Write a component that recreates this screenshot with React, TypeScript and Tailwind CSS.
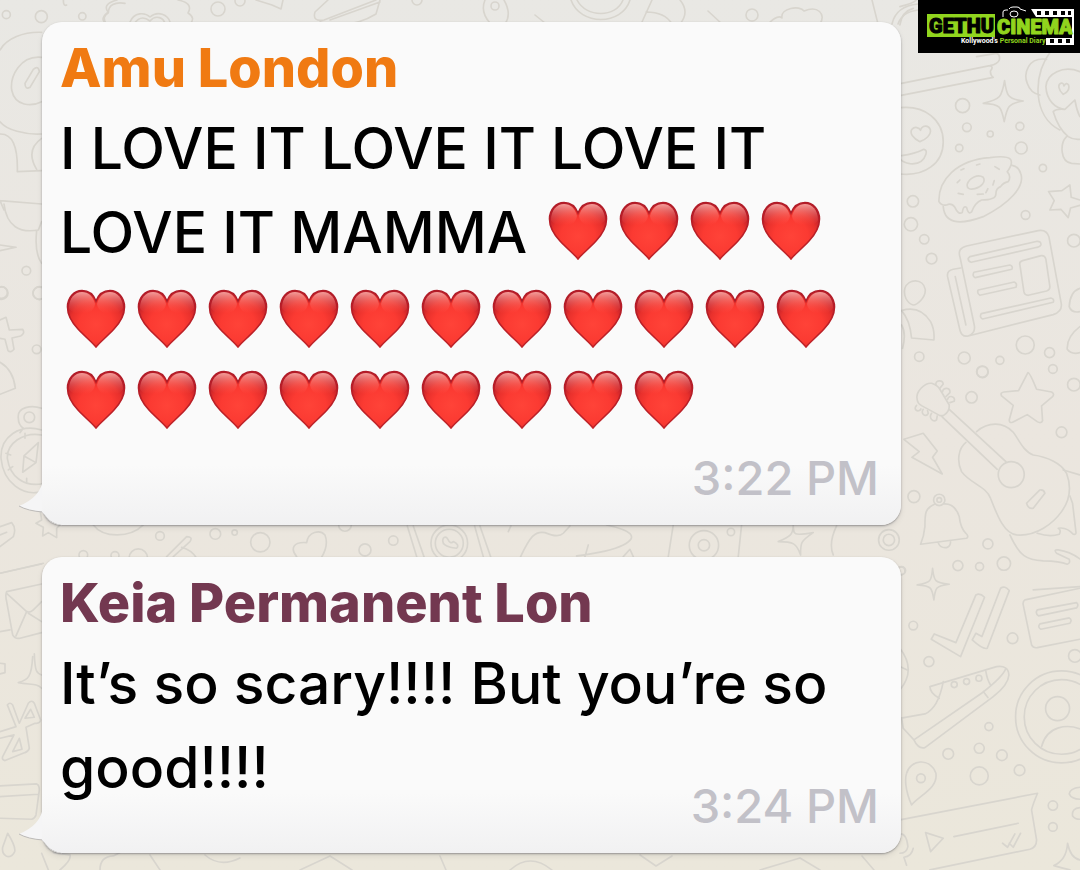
import React from "react";

const Heart = () => (
  <svg viewBox="0 0 60 60" className="inline-block w-[60px] h-[60px] shrink-0" role="img" aria-label="red heart">
    <defs>
      <radialGradient id="heartFill" cx="0.5" cy="0.6" r="0.6">
        <stop offset="0" stopColor="#ff4338" />
        <stop offset="0.5" stopColor="#fb3a32" />
        <stop offset="0.75" stopColor="#e8302c" />
        <stop offset="1" stopColor="#b81c28" />
      </radialGradient>
      <linearGradient id="heartShine" x1="0" y1="0" x2="0" y2="1">
        <stop offset="0" stopColor="#ffb4ae" stopOpacity="0.85" />
        <stop offset="0.95" stopColor="#ff5a50" stopOpacity="0" />
      </linearGradient>
      <linearGradient id="heartEdge" x1="0" y1="0" x2="0" y2="1">
        <stop offset="0" stopColor="#b01c28" />
        <stop offset="1" stopColor="#bf2227" />
      </linearGradient>
    </defs>
    <path
      d="M30 58C27 54 19 47.500 12 40C5 32.500 1.500 26 1.500 18C1.500 8.500 8 1.500 16 1.500C22.500 1.500 27.500 5.500 30 12C32.500 5.500 37.500 1.500 44 1.500C52 1.500 58.500 8.500 58.500 18C58.500 26 55 32.500 48 40C41 47.500 33 54 30 58Z"
      fill="url(#heartFill)"
      stroke="url(#heartEdge)"
      strokeWidth="1.600"
    />
    <path d="M3 19C3 9 9 3 16 3C22.500 3 27 7 29 15C27 28 8 28 3 19Z" fill="url(#heartShine)" />
    <path d="M57 19C57 9 51 3 44 3C37.500 3 33 7 31 15C33 28 52 28 57 19Z" fill="url(#heartShine)" />
  </svg>
);

const hearts = (count: number) =>
  Array.from({ length: count }, (_, i) => (
    <span key={i} className="inline-flex w-[71px] justify-center">
      <Heart />
    </span>
  ));

const Doodles = () => (
  <svg
    viewBox="0 0 1080 870"
    preserveAspectRatio="xMaxYMin slice"
    className="absolute inset-0 h-full w-full fill-none stroke-[#d8d5ce]"
    aria-hidden="true"
  >
    <g strokeWidth="5" strokeLinejoin="round" strokeLinecap="round">
      {/* books, smiley, sparkle, doughnut, penguin */}
      <g transform="scale(0.3333) translate(2700 0)">
        <path d="M0 20Q40 10 50 0M0 75Q5 35 40 25M5 250L270 197Q282 200 272 212Q270 225 280 232L0 287M230 170L290 160Q302 165 298 180Q294 192 270 197" />
        <path d="M0 323C75 315 130 360 130 425C130 490 75 530 0 522M60 425C40 415 28 400 36 388C45 378 58 383 62 391C66 376 85 374 91 388C96 405 75 420 60 425ZM5 467Q45 462 72 448Q82 450 78 463Q68 495 30 491Q10 488 2 478" />
        <path d="M314 242C320 285 322 298 370 303C325 310 322 320 313 365C304 320 302 312 250 310C302 298 306 290 314 242Z" />
        <path d="M117 605C115 540 170 480 270 473Q320 466 332 478Q340 492 322 515Q335 530 325 545Q310 548 302 560Q288 565 288 582Q288 600 245 600Q225 608 215 636Q205 645 200 622Q190 615 187 638Q175 645 165 622Q155 608 140 615Q125 618 117 605ZM130 620C135 680 195 670 250 650C330 610 375 560 363 522Q357 500 337 496M202 553C208 532 235 522 250 532C258 545 245 562 225 566C208 570 200 564 202 553Z" />
        <path d="M183 510L192 506M230 495L240 492M285 500L298 508M180 540L172 548M283 542L279 555M175 580L190 583M232 583L250 582M258 578L264 566" />
        <path d="M446 575L486 572L510 555L514 592L540 600M446 575L463 602L450 630L483 628L505 653L512 624L540 616" />
        <path d="M440 178C385 170 370 220 382 250Q392 280 420 285M455 150C395 230 400 350 480 390M540 215C490 195 440 220 438 260C440 300 465 325 495 328L525 300Q530 330 540 350M495 328Q470 325 460 335Q475 385 505 410Q520 420 540 418M500 410C480 430 480 485 515 490L540 492M490 283C475 270 472 252 485 249Q491 249 492 258Q500 245 506 255C510 268 500 278 490 283Z" />
        <circle cx="188" cy="317" r="21" /><circle cx="201" cy="382" r="13" /><circle cx="271" cy="402" r="9" /><circle cx="360" cy="379" r="12" />
        <circle cx="364" cy="444" r="18" /><circle cx="178" cy="444" r="11" /><circle cx="429" cy="504" r="11" /><circle cx="39" cy="604" r="17" /><circle cx="377" cy="645" r="13" />
      </g>
      {/* newspaper */}
      <g transform="scale(0.3333) translate(2700 600)">
        <path d="M180 170Q172 145 200 138L415 92Q440 88 447 110L484 310Q488 335 460 344L205 408Q185 412 180 390L143 230Q140 212 160 208L182 204M180 170L223 375Q228 400 205 408M166 230L198 375" />
        <path d="M210 170L412 124Q424 124 423 134Q422 140 412 142L214 187Q204 184 205 175ZM222 217L330 195Q340 198 336 208L226 233Q216 228 222 217ZM235 270L343 246Q353 250 348 262L240 286Q230 280 235 270ZM244 341L453 294Q464 296 460 307L248 357Q238 352 244 341ZM360 195Q357 186 368 182L424 167Q435 166 438 178L450 260Q450 270 440 273L385 286Q374 286 372 275Z" />
        <path d="M15 265C25 235 70 235 76 268C78 295 50 315 40 315C20 310 10 285 15 265ZM5 332Q60 315 92 365Q105 390 102 420L35 414Q30 360 5 332ZM5 375Q20 400 8 445M540 265Q510 275 508 320Q515 340 540 335M540 380Q500 410 502 448Q515 465 540 458" />
        <circle cx="33" cy="73" r="20" /><circle cx="73" cy="118" r="14" /><circle cx="95" cy="176" r="16" /><circle cx="522" cy="122" r="19" /><circle cx="376" cy="435" r="27" />
        <circle cx="58" cy="470" r="14" /><circle cx="193" cy="474" r="18" /><circle cx="300" cy="481" r="12" /><circle cx="248" cy="516" r="17" /><circle cx="449" cy="458" r="15" /><circle cx="459" cy="507" r="13" />
      </g>
      {/* guitar, star, bolt, bell, whale */}
      <g transform="scale(0.3333) translate(2700 1110)">
        <path d="M52 90C45 65 75 38 95 40Q112 45 120 58L148 105Q150 125 130 137L120 137L65 107Q53 100 52 90ZM148 118L318 275M126 140L292 298" />
        <path d="M108 45C105 30 128 28 130 42L120 55M128 65C130 50 152 53 150 68L138 80M143 88C148 73 167 80 163 94L150 98M50 106C38 118 55 130 63 117M70 118C60 130 78 145 85 130L83 122M95 130C85 145 100 158 110 150L112 138" />
        <path d="M230 185C265 155 310 155 340 187C355 205 370 245 400 255C440 260 485 280 500 310C515 350 510 390 485 425C460 460 410 500 350 495C310 490 290 430 272 385C260 350 210 340 185 305C170 275 175 235 198 217" />
        <circle cx="334" cy="314" r="39" />
        <path d="M380 400L420 360Q432 358 435 370L400 415Q385 418 380 400Z" />
        <path d="M384 8Q390 8 410 58L455 66Q465 72 458 80L425 108L428 152Q424 162 412 155L382 134L338 157Q328 160 328 150L340 106L305 78Q300 68 312 66L356 62Z" />
        <path d="M12 208L70 190L112 243L98 262L127 312L36 262L58 245Z" />
        <circle cx="118" cy="390" r="17" /><circle cx="118" cy="390" r="7" />
        <path d="M105 402C75 415 75 430 75 470Q72 500 62 523L200 505Q208 500 198 490Q182 475 178 440Q165 400 132 402M115 518Q120 535 140 533Q152 530 152 515" />
        <path d="M330 495C360 560 380 570 430 573Q480 574 502 583Q512 580 508 568L470 550Q460 538 475 540Q510 545 540 567M412 490Q450 502 478 493Q485 480 475 475Q500 470 520 493Q530 495 528 485L518 400L510 378M490 300L540 315M400 660Q470 655 540 650" />
        <circle cx="247" cy="5" r="17" /><circle cx="215" cy="82" r="17" /><circle cx="522" cy="44" r="19" /><circle cx="485" cy="187" r="16" /><circle cx="42" cy="380" r="18" />
        <circle cx="264" cy="522" r="15" /><circle cx="174" cy="587" r="15" /><circle cx="239" cy="590" r="12" /><circle cx="312" cy="581" r="20" /><circle cx="3" cy="603" r="12" />
      </g>
      {/* ticks, note, shuttle, contact, pin, voice message */}
      <g transform="scale(0.3333) translate(2700 1680)">
        <path d="M98 25C102 65 105 68 148 73C108 78 106 82 102 120C96 82 95 78 52 75C92 68 95 65 98 25Z" />
        <path d="M94 238L103 222L168 248L228 105Q240 98 254 112L182 290ZM217 240L228 220L246 230L302 85Q315 75 328 92L262 265Q250 270 217 240Z" />
        <path d="M540 85L375 120Q368 125 370 135L395 255Q400 265 412 263L540 238M412 150L530 128Q538 135 530 144L416 168Q405 160 412 150ZM420 192L508 174Q518 180 510 190L423 208Q412 202 420 192Z" />
        <path d="M8 474L75 462Q115 445 130 365M90 380L290 320Q325 315 327 345Q325 375 280 410L75 563Q55 568 42 540L10 505L5 474M42 540L245 400Q310 350 318 325M90 380Q90 400 118 415M258 335Q262 360 272 375M250 395L264 413" />
        <circle cx="163" cy="374" r="9" /><circle cx="200" cy="365" r="9" /><circle cx="237" cy="355" r="9" />
        <circle cx="485" cy="471" r="138" /><circle cx="485" cy="471" r="112" /><circle cx="473" cy="446" r="36" />
        <path d="M425 560C440 500 500 485 560 515M0 265Q50 330 0 390M0 320L22 330" />
        <path d="M35 735C15 690 15 655 20 640C30 600 90 590 108 640C115 685 60 705 35 735Z" /><circle cx="63" cy="655" r="13" />
        <path d="M0 780L413 700Q400 730 395 750L410 840Q410 862 390 868L90 930M77 818L130 835L92 875ZM162 830L355 790M308 850L323 862L345 822M328 850L340 862L362 820M0 822Q20 820 24 860Q20 880 0 880M40 865Q35 890 12 892L20 916" />
        <path d="M540 682Q510 685 508 702Q515 718 540 718M540 743Q515 745 518 768Q525 778 540 778M503 850Q512 895 540 900M503 850Q500 900 462 917Q490 925 510 930" />
        <circle cx="40" cy="197" r="13" /><circle cx="87" cy="305" r="15" /><circle cx="338" cy="235" r="16" /><circle cx="525" cy="288" r="19" /><circle cx="267" cy="500" r="12" />
        <circle cx="145" cy="582" r="16" /><circle cx="238" cy="565" r="15" /><circle cx="306" cy="586" r="16" /><circle cx="359" cy="631" r="16" /><circle cx="238" cy="648" r="27" />
        <circle cx="459" cy="737" r="14" /><circle cx="459" cy="801" r="13" />
      </g>
      {/* left margin */}
      <g transform="scale(0.3333)">
        <path d="M190 0Q190 20 200 15M375 10C345 5 325 15 325 38Q305 50 318 70M125 97C70 95 20 115 0 150M125 172C60 165 30 230 35 270C45 320 95 320 125 305M75 250L100 208Q115 195 118 215L90 262Q75 270 75 250ZM0 365C20 390 75 405 125 402M0 402Q55 400 52 515L125 512M0 602L125 612M12 612C20 680 60 700 115 690L125 665M0 602L12 630M0 735L48 742L0 752M125 415Q75 450 110 508M110 692C105 740 110 770 125 790" />
        <circle cx="19" cy="44" r="12" /><circle cx="124" cy="50" r="18" /><circle cx="247" cy="49" r="11" /><circle cx="79" cy="812" r="13" /><circle cx="5" cy="879" r="19" /><circle cx="118" cy="879" r="19" />
      </g>
      <g transform="scale(0.3333) translate(0 840)">
        <path d="M0 120L18 112L28 150L68 148Q76 160 62 168L36 174L42 208Q32 220 24 212L15 178L0 175M0 247Q40 270 46 325L0 343M125 385C95 375 50 380 55 415Q55 435 70 445M125 450C60 430 0 470 3 535C10 610 70 650 125 635M125 465C70 455 20 490 22 535C30 590 70 620 125 612M70 445L60 458M75 460V475M18 520L32 525M25 570L38 560M80 610V595M115 488L72 528L68 577L108 548ZM72 528L108 548M0 740L35 728Q50 745 40 770L0 800M0 765L20 757M120 690L125 720L108 730L130 742L128 768L145 758L170 773L170 745L185 730M0 880L130 850" />
        <circle cx="88" cy="412" r="16" /><circle cx="5" cy="38" r="17" /><circle cx="118" cy="40" r="19" /><circle cx="110" cy="208" r="13" />
      </g>
      <g transform="scale(0.3333) translate(0 1680)">
        <path d="M0 40L125 12M20 95L125 72M20 95Q15 105 20 125L38 225Q45 238 60 235L125 218M20 100L80 155Q90 160 100 150L125 125M48 228L80 155M0 215L30 210M85 160L125 185M0 310L15 312V338L0 342M103 282C105 335 110 340 125 345M98 290C95 350 85 360 55 368C95 375 110 370 125 385" />
        <path d="M22 435Q30 425 38 435L58 490L85 430Q95 418 103 430L122 480Q120 492 105 490L78 502L88 565Q85 575 75 578L15 602Q5 600 8 590L42 525L0 535M0 515L48 500L22 435M75 475L92 448L103 472ZM38 575L58 535L66 568ZM0 678L110 672Q118 675 118 690L108 765Q105 775 95 778L0 775M0 710L115 703M23 820Q48 860 44 875Q35 895 18 888Q5 880 8 862ZM125 880L145 930M160 878L210 885Q215 900 180 930M300 930Q300 890 340 888L360 878" />
      </g>
      {/* gap between the bubbles */}
      <g transform="scale(0.3333) translate(90 1500)">
        <path d="M190 75C220 115 300 115 340 75M410 170L470 110Q490 110 480 125L430 170M455 142Q485 150 500 175M800 170C780 145 790 125 830 128C835 95 870 88 885 105C895 130 885 155 875 172M1132 78L1160 170M1150 78L1182 170M1240 115Q1230 140 1280 145Q1290 135 1270 125Q1262 135 1252 115Q1245 108 1240 115ZM1334 78L1360 170M1350 78L1382 170M1443 78L1435 95M1472 170C1500 110 1515 92 1545 98Q1585 115 1600 100L1620 78M1730 75C1800 90 1830 110 1780 135Q1740 155 1640 168M1675 135L1665 170M1780 170L1800 148L1810 170M1930 75L1915 170M2135 75L2125 170M2290 75C2290 105 2290 108 2350 98C2310 125 2312 130 2312 165C2300 130 2290 125 2245 125C2280 110 2290 105 2290 75M2420 78Q2395 130 2410 165" />
        <circle cx="390" cy="108" r="13" /><circle cx="556" cy="102" r="16" /><circle cx="614" cy="98" r="8" /><circle cx="691" cy="127" r="29" /><circle cx="325" cy="175" r="28" /><circle cx="160" cy="165" r="13" /><circle cx="255" cy="167" r="12" />
        <circle cx="1005" cy="150" r="18" /><circle cx="1090" cy="122" r="14" /><circle cx="945" cy="75" r="19" /><circle cx="1258" cy="130" r="55" /><circle cx="1258" cy="130" r="42" />
        <circle cx="2022" cy="136" r="44" /><circle cx="2022" cy="136" r="17" /><circle cx="2103" cy="96" r="11" /><circle cx="2577" cy="120" r="31" /><circle cx="2577" cy="120" r="17" /><circle cx="2615" cy="212" r="12" />
      </g>
      {/* top strip */}
      <path strokeWidth="1.6" d="M117 0Q102 4 108 12Q98 20 108 24M178 0C188 2 192 6 188 13Q196 18 190 24M130 22C134 12 145 12 150 17C158 10 168 15 170 22M134 24C140 15 146 18 150 21C156 14 164 18 165 24M256 0L272 5L281 9L283 0M328 0L315 12Q312 22 324 20L376 0M330 20L380 2M320 22Q350 30 376 14L380 0M485 0Q480 12 490 23M504 0Q512 14 505 24M571 0C580 26 622 26 630 0M577 0C586 18 616 18 623 0M652 0L642 22M680 0Q690 12 680 24M646 12Q665 12 672 24M708 11L722 24M535 15L545 23M768 24C776 16 780 16 782 18C780 8 800 5 804 11C818 5 826 14 820 24M872 0L878 24M892 24Q896 6 918 4M898 24Q902 12 918 10" />
      <g strokeWidth="1.6">
        <circle cx="218" cy="9" r="7" /><circle cx="240" cy="1" r="5" /><circle cx="495" cy="6" r="4" /><circle cx="417" cy="0" r="5" /><circle cx="752" cy="15" r="6" />
      </g>
      {/* bottom strip */}
      <path strokeWidth="1.6" d="M150 855L160 870M205 855Q220 868 240 858M300 870L330 856L352 870M440 856L446 870M510 870Q530 852 552 870M640 855L656 866L672 856M760 870L800 858L820 870M862 856L874 870" />
    </g>
  </svg>
);

const Watermark = () => (
  <div className="absolute right-0 top-0 h-[53px] w-[162px] bg-black">
    <svg viewBox="0 0 162 53" className="h-full w-full" role="img" aria-label="Gethu Cinema">
      <path d="M113 9H156V45H128V38H154V17H118Z" fill="#fff" />
      <path d="M119 11h4v4h-4zM127 11h4v4h-4zM135 11h4v4h-4zM143 11h4v4h-4zM150 11h3v4h-3zM132 39h4v4h-4zM140 39h4v4h-4zM148 39h4v4h-4z" fill="#000" />
      <path d="M85 17V12Q85 10 88 10H90M91 9Q92 7 95 7H99Q102 7 102 9L108 11" fill="none" stroke="#fff" strokeWidth="1" />
      <ellipse cx="96" cy="14" rx="4" ry="3" fill="#000" stroke="#fff" strokeWidth="1" />
      <rect x="9" y="14" width="68" height="23" fill="#91d51e" />
      <g className="font-['Roboto',sans-serif] font-black" strokeLinejoin="round">
        <text x="11" y="33" fontSize="20" fill="#000" stroke="#000" strokeWidth="1">GETHU</text>
        <text x="79" y="34" fontSize="20" fill="#91d51e" stroke="#91d51e" strokeWidth="1">CINEMA</text>
      </g>
      <text x="43" y="43" fontSize="7" className="font-['Roboto',sans-serif] font-bold" fill="#fff">
        Kollywood's <tspan fill="#91d51e">Personal Diary</tspan>
      </text>
    </svg>
  </div>
);

type BubbleProps = {
  name: string;
  nameClass: string;
  time: string;
  timeClass: string;
  children: React.ReactNode;
};

const Bubble = ({ name, nameClass, time, timeClass, children }: BubbleProps) => (
  <article className="relative rounded-[20px] bg-[linear-gradient(to_top,#f1f1f2,#fafafa_60px)] pt-3 pr-[22px] pb-[19px] pl-[18px] shadow-[0_1px_2px_rgba(60,60,70,0.45),0_3px_6px_rgba(0,0,0,0.08)]">
    <svg viewBox="0 0 44 46" className="absolute bottom-0 -left-6 h-[46px] w-11 overflow-visible" aria-hidden="true">
      <path d="M25 0Q23 18 1 27Q10 32 25 33Q30 44 44 46V0Z" fill="#f5f5f6" />
      <path d="M1 27Q10 32 25 33Q30 44 44 46" fill="none" stroke="#bcbab8" strokeWidth="1" />
      <path d="M24 0H44V46Q34 45 28 37L24 33Z" fill="url(#tailFade)" />
      <defs>
        <linearGradient id="tailFade" x1="0" y1="0" x2="0" y2="1">
          <stop offset="0" stopColor="#f8f8f8" />
          <stop offset="1" stopColor="#f1f1f2" />
        </linearGradient>
      </defs>
    </svg>
    <h2 className={`mb-[5px] text-[54px] leading-[68px] font-extrabold ${nameClass}`}>{name}</h2>
    {children}
    <time className={`block text-right text-[47px] leading-[56px] font-[550] text-[#c2c1c8] ${timeClass}`}>{time}</time>
  </article>
);

const App = () => {
  return (
    <main className="relative min-h-screen overflow-hidden bg-linear-to-b from-[#e9e8e4] via-[#ebe6df] to-[#ebe7db] font-['Inter',sans-serif]">
      <Doodles />
      <section className="relative flex flex-col gap-8 pt-[22px] pr-[179px] pb-[17px] pl-[42px]">
        <Bubble name="Amu London" nameClass="text-[#f07a12]" time="3:22 PM" timeClass="mt-5">
          <p className="text-[57px] leading-[84px] font-[550] text-black">
            I LOVE IT LOVE IT LOVE IT LOVE IT MAMMA <span className="inline-flex h-[72px] items-start align-middle">{hearts(4)}</span>
          </p>
          <div className="flex flex-wrap gap-y-[21px] pt-[14px]">{hearts(20)}</div>
        </Bubble>
        <Bubble name="Keia Permanent Lon" nameClass="text-[#733850]" time="3:24 PM" timeClass="-mt-8">
          <p className="text-[57px] leading-[84px] font-[550] text-black">It’s so scary!!!! But you’re so good!!!!</p>
        </Bubble>
      </section>
      <Watermark />
    </main>
  );
};

export default App;
